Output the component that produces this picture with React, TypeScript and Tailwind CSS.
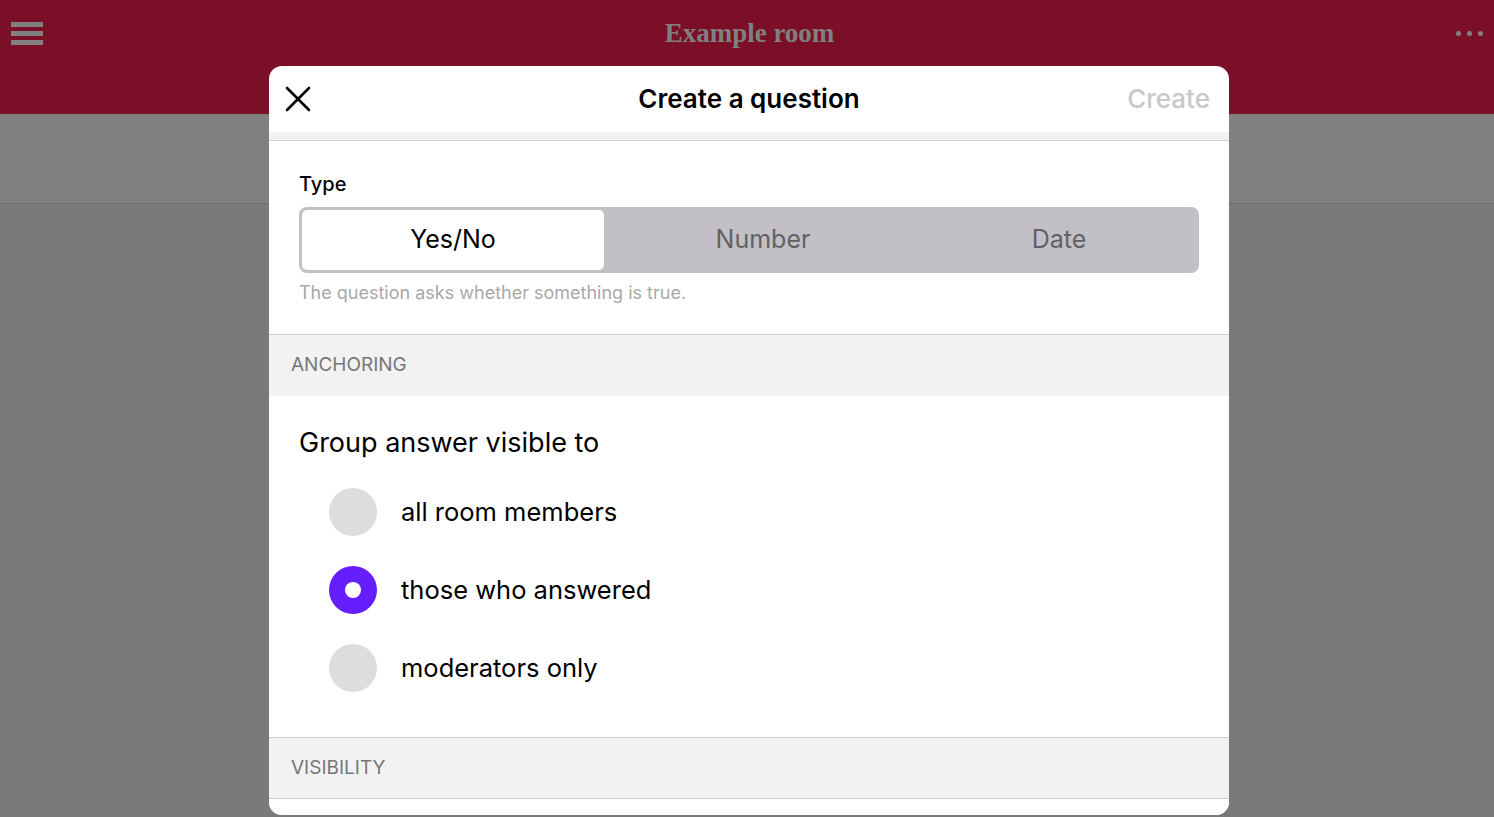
import React from "react";

const font = { fontFamily: "Inter, 'Noto Sans', sans-serif" };

function Radio({ label, selected }: { label: string; selected?: boolean }) {
  return (
    <div className="flex items-center h-[48px]">
      {selected ? (
        <div className="w-[48px] h-[48px] rounded-full bg-[#651fff] flex items-center justify-center">
          <div className="w-[16px] h-[16px] rounded-full bg-white" />
        </div>
      ) : (
        <div className="w-[48px] h-[48px] rounded-full bg-[#dddddd]" />
      )}
      <span className="ml-[24px] text-[25.5px] leading-[32px] text-black">{label}</span>
    </div>
  );
}

export default function App() {
  return (
    <div className="relative w-[1494px] h-[817px] overflow-hidden" style={font}>
      {/* page behind */}
      <div className="flex flex-col h-full">
        <div className="h-[114px] bg-[#7b0f28] flex items-start justify-between pl-[11px] pr-[11px]">
          <div className="flex flex-col gap-[4px] mt-[22px]">
            <div className="w-[32px] h-[5px] bg-[#808080]" />
            <div className="w-[32px] h-[5px] bg-[#808080]" />
            <div className="w-[32px] h-[5px] bg-[#808080]" />
          </div>
          <div
            className="mt-[16px] text-[27px] leading-[34px] font-bold text-[#808080]"
            style={{ fontFamily: "'Liberation Serif', 'DejaVu Serif', serif" }}
          >
            Example room
          </div>
          <div className="flex gap-[6px] mt-[31px]">
            <div className="w-[5px] h-[5px] rounded-full bg-[#808080]" />
            <div className="w-[5px] h-[5px] rounded-full bg-[#808080]" />
            <div className="w-[5px] h-[5px] rounded-full bg-[#808080]" />
          </div>
        </div>
        <div className="h-[90px] bg-[#808080] border-b border-[#6c6c6c]" />
        <div className="flex-1 bg-[#7a7a7a]" />
      </div>

      {/* modal */}
      <div className="absolute left-[269px] top-[66px] w-[960px] h-[749px] bg-white rounded-[13px] overflow-hidden flex flex-col">
        <div className="h-[66px] flex items-center justify-between pl-[16px] pr-[19px] relative">
          <svg width="26" height="26" viewBox="0 0 26 26" className="block">
            <path d="M2 2 L24 24 M24 2 L2 24" stroke="#000" strokeWidth="2.6" strokeLinecap="round" />
          </svg>
          <div className="absolute left-0 right-0 text-center text-[26px] leading-[32px] font-semibold text-black pointer-events-none">
            Create a question
          </div>
          <div className="text-[26px] leading-[32px] font-medium text-[#c7c7cc]">Create</div>
        </div>
        <div className="h-[9px] bg-[#f2f2f2] border-b border-[#cfcfcf]" />

        <div className="px-[30px] pt-[31px] pb-[31px] border-b border-[#cfcfcf]">
          <div className="text-[20px] leading-[24px] font-medium text-black">Type</div>
          <div className="mt-[11px] h-[66px] rounded-[8px] bg-[#c2bfc7] p-[3px] flex">
            <div className="w-[302px] bg-white rounded-[5px] flex items-center justify-center text-[25px] text-black">
              Yes/No
            </div>
            <div className="w-[318px] flex items-center justify-center text-[25px] text-[#626262]">Number</div>
            <div className="flex-1 flex items-center justify-center text-[25px] text-[#626262]">Date</div>
          </div>
          <div className="mt-[10px] text-[18px] leading-[20px] text-[#a8a8a8]">
            The question asks whether something is true.
          </div>
        </div>

        <div className="h-[61px] bg-[#f2f2f2] flex items-center px-[22px] text-[19px] text-[#777777]">
          ANCHORING
        </div>

        <div className="px-[30px] pt-[31px] pb-[45px] border-b border-[#cfcfcf]">
          <div className="text-[27px] leading-[32px] text-black">Group answer visible to</div>
          <div className="mt-[29px] pl-[30px] flex flex-col gap-[30px]">
            <Radio label="all room members" />
            <Radio label="those who answered" selected />
            <Radio label="moderators only" />
          </div>
        </div>

        <div className="h-[61px] bg-[#f2f2f2] flex items-center px-[22px] text-[19px] text-[#777777] border-b border-[#cfcfcf]">
          VISIBILITY
        </div>
        <div className="flex-1 bg-white" />
      </div>
    </div>
  );
}
